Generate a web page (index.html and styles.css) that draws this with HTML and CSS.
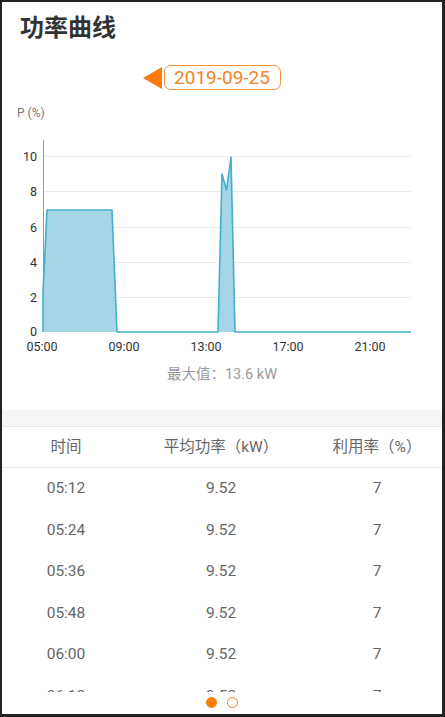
FILE: index.html
```html
<!DOCTYPE html>
<html lang="zh-CN">
<head>
<meta charset="utf-8">
<title>功率曲线</title>
<link rel="stylesheet" href="styles.css">
</head>
<body>
<div class="frame">
  <h1 class="title">功率曲线</h1>
  <div class="date-row">
    <svg class="arrow" width="19" height="22" viewBox="0 0 19 22"><polygon points="0,11 19,0 19,22" fill="#ff7a0a"/></svg>
    <div class="date-pill">2019-09-25</div>
  </div>
  <svg class="chart" width="440" height="256" viewBox="2 100 440 256">
    <text x="17" y="117" class="unit">P (%)</text>
    <g class="grid">
      <line x1="43" y1="156.5" x2="411" y2="156.5"/>
      <line x1="43" y1="191.5" x2="411" y2="191.5"/>
      <line x1="43" y1="227.5" x2="411" y2="227.5"/>
      <line x1="43" y1="262.5" x2="411" y2="262.5"/>
      <line x1="43" y1="297.5" x2="411" y2="297.5"/>
    </g>
    <line class="yaxis" x1="43.5" y1="140" x2="43.5" y2="332"/>
    <g class="ylabels">
      <text x="37" y="161">10</text>
      <text x="37" y="196">8</text>
      <text x="37" y="232">6</text>
      <text x="37" y="267">4</text>
      <text x="37" y="302">2</text>
      <text x="37" y="336">0</text>
    </g>
    <polygon class="area" points="43,332 43,292 47,210 112,210 117,332 218,332 222,174 226.5,190 231,157 235,332"/>
    <polyline class="series" points="43,332 43,292 47,210 112,210 117,332 218,332 222,174 226.5,190 231,157 235,332 411,332"/>
    <g class="xlabels">
      <text x="42" y="351">05:00</text>
      <text x="124" y="351">09:00</text>
      <text x="206" y="351">13:00</text>
      <text x="288" y="351">17:00</text>
      <text x="370" y="351">21:00</text>
    </g>
  </svg>
  <div class="maxval">最大值：13.6 kW</div>
  <div class="gap"></div>
  <div class="table">
    <div class="thead">
      <span>时间</span><span>平均功率（kW）</span><span>利用率（%）</span>
    </div>
    <div class="tbody">
      <div class="row"><span>05:12</span><span>9.52</span><span>7</span></div>
      <div class="row"><span>05:24</span><span>9.52</span><span>7</span></div>
      <div class="row"><span>05:36</span><span>9.52</span><span>7</span></div>
      <div class="row"><span>05:48</span><span>9.52</span><span>7</span></div>
      <div class="row"><span>06:00</span><span>9.52</span><span>7</span></div>
      <div class="row"><span>06:12</span><span>9.52</span><span>7</span></div>
    </div>
  </div>
  <div class="dots">
    <span class="dot active"></span>
    <span class="dot"></span>
  </div>
</div>
</body>
</html>
```

FILE: styles.css
```css
* { box-sizing: border-box; }
html, body { margin: 0; padding: 0; background: #222; }
body {
  font-family: "Roboto", "Noto Sans CJK SC", sans-serif;
  color: #666;
}
.frame {
  width: 445px;
  height: 717px;
  border-style: solid;
  border-color: #222;
  border-width: 2px 3px 3px 2px;
  background: #fff;
  display: flex;
  flex-direction: column;
  overflow: hidden;
}
.title {
  margin: 0;
  height: 48px;
  line-height: 48px;
  padding-left: 18px;
  font-family: "Noto Sans CJK SC", sans-serif;
  font-size: 24px;
  font-weight: 700;
  color: #333;
}
.date-row {
  height: 50px;
  padding-top: 5px;
  display: flex;
  align-items: center;
  justify-content: center;
  gap: 2px;
  padding-right: 21px;
}
.arrow { display: block; }
.date-pill {
  width: 117px;
  height: 25px;
  border: 1px solid #f5903a;
  border-radius: 7px;
  color: #f28428;
  font-size: 19px;
  line-height: 23px;
  text-align: center;
}
.chart { display: block; flex: none; }
.chart text { font-family: "Roboto", sans-serif; }
.unit { font-size: 12px; fill: #777; }
.grid line { stroke: #ececec; stroke-width: 1; }
.yaxis { stroke: #9a9a9a; stroke-width: 1; }
.ylabels text { font-size: 12.5px; fill: #333; text-anchor: end; }
.xlabels text { font-size: 12.5px; fill: #333; text-anchor: middle; }
.area { fill: #a6d5e6; stroke: none; }
.series { fill: none; stroke: #42b0cb; stroke-width: 1.6; stroke-linejoin: round; }
.maxval {
  height: 54px;
  padding-bottom: 16px;
  line-height: 38px;
  text-align: center;
  font-size: 14.5px;
  color: #9a9a9a;
}
.gap {
  height: 17px;
  flex: none;
  background: #f6f6f6;
  border-bottom: 1px solid #e6e6e6;
}
.table { flex: none; }
.thead, .row {
  display: grid;
  grid-template-columns: 128px 1fr 130px;
  text-align: center;
}
.thead {
  height: 41px;
  line-height: 40px;
  border-bottom: 1px solid #e8e8e8;
  font-size: 15.5px;
  color: #666;
}
.tbody {
  height: 224px;
  overflow: hidden;
}
.row {
  height: 41.5px;
  line-height: 41.5px;
  font-size: 15.5px;
  color: #666;
}
.dots {
  height: 22px;
  display: flex;
  align-items: center;
  justify-content: center;
  gap: 10px;
  padding-bottom: 1px;
}
.dot {
  width: 11px;
  height: 11px;
  border-radius: 50%;
  border: 1.5px solid #fa7d0c;
  background: #fff;
}
.dot.active { background: #fa7d0c; }
```
